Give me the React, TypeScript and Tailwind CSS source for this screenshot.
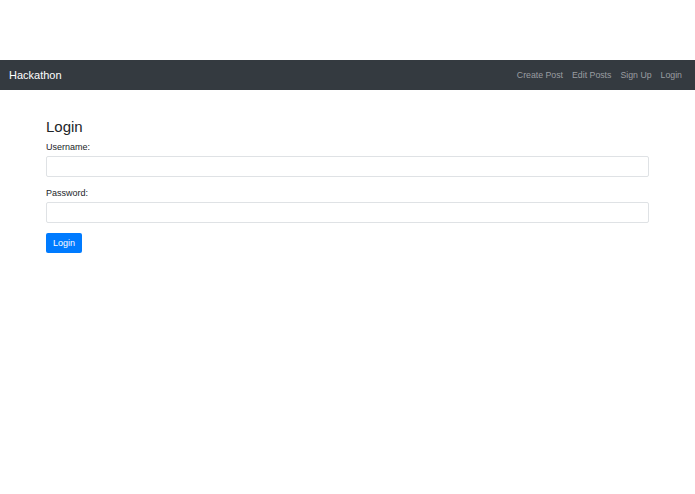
export default function App() {
  const font = { fontFamily: '"Liberation Sans", Arial, sans-serif' };
  return (
    <div className="min-h-[494px] bg-white" style={font}>
      <div className="h-[60px]" />
      <nav className="h-[30px] bg-[#343a40] flex items-center justify-between pl-[9px] pr-[13px]">
        <span className="text-[11px] text-white leading-none">Hackathon</span>
        <div className="flex items-center gap-[9px] text-[8.75px] text-[#9a9da0] leading-none">
          <span>Create Post</span>
          <span>Edit Posts</span>
          <span>Sign Up</span>
          <span>Login</span>
        </div>
      </nav>
      <div className="px-[46px] pt-[28px]">
        <h3 className="text-[15px] leading-[18px] text-[#212529] font-medium">Login</h3>
        <div className="mt-[5px]">
          <label className="block text-[9px] leading-[13px] text-[#212529]">Username:</label>
          <input className="mt-[2px] block w-full h-[21px] border border-[#dfe2e5] rounded-[2px] bg-white outline-none" />
        </div>
        <div className="mt-[10px]">
          <label className="block text-[9px] leading-[13px] text-[#212529]">Password:</label>
          <input type="password" className="mt-[2px] block w-full h-[21px] border border-[#dfe2e5] rounded-[2px] bg-white outline-none" />
        </div>
        <button className="mt-[10px] h-[20px] w-[36px] bg-[#007bff] text-white text-[9px] rounded-[2px] leading-none">Login</button>
      </div>
    </div>
  );
}
